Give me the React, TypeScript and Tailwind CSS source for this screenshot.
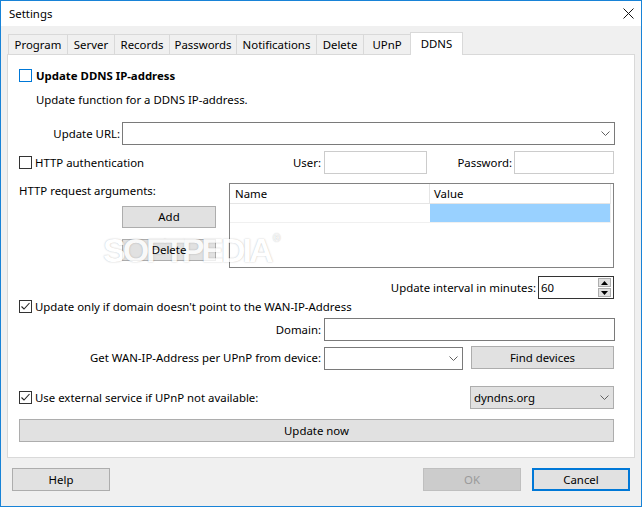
import React from "react";

function Check({ checked, blue }: { checked?: boolean; blue?: boolean }) {
  return (
    <span
      className={`w-[13px] h-[13px] shrink-0 border bg-white flex items-center justify-center ${
        blue ? "border-[#0078d7]" : "border-[#333333]"
      }`}
    >
      {checked && (
        <svg width="11" height="11" viewBox="0 0 11 11">
          <path d="M1.5 5.5 L4 8 L9.5 2" stroke="#222" strokeWidth="1.1" fill="none" />
        </svg>
      )}
    </span>
  );
}

function Chevron() {
  return (
    <svg width="9" height="5" viewBox="0 0 9 5" className="shrink-0">
      <polyline points="0.5,0.5 4.5,4.5 8.5,0.5" stroke="#606060" strokeWidth="1" fill="none" />
    </svg>
  );
}

const tabs: { label: string; w: string; sel?: boolean }[] = [
  { label: "Program", w: "w-[60px]" },
  { label: "Server", w: "w-[48px]" },
  { label: "Records", w: "w-[56px]" },
  { label: "Passwords", w: "w-[68px]" },
  { label: "Notifications", w: "w-[81px]" },
  { label: "Delete", w: "w-[48px]" },
  { label: "UPnP", w: "w-[48px]" },
  { label: "DDNS", w: "w-[53px]", sel: true },
];

export default function App() {
  return (
    <div className="w-[642px] h-[507px] border border-[#1883d7] bg-[#f0f0f0] flex flex-col text-[11.4px] leading-[16px] text-black font-['Noto_Sans',sans-serif] overflow-hidden">
      {/* Title bar */}
      <div className="h-[25px] bg-white flex items-center justify-between pl-[8px] pr-[7px] shrink-0">
        <span>Settings</span>
        <svg width="11" height="11" viewBox="0 0 11 11">
          <path d="M0.5 0.5 L10.5 10.5 M10.5 0.5 L0.5 10.5" stroke="#111" strokeWidth="1" />
        </svg>
      </div>

      <div className="flex-1 flex flex-col px-[6px]">
        {/* Tabs */}
        <div className="mt-[6px] h-[22px] flex items-end pl-[1px] shrink-0">
          {tabs.map((t, i) =>
            t.sel ? (
              <div
                key={t.label}
                className={`${t.w} h-[23px] -mb-px -ml-px relative z-10 bg-white border-t border-l border-r border-[#d9d9d9] flex items-start justify-center pt-[3px]`}
              >
                {t.label}
              </div>
            ) : (
              <div
                key={t.label}
                className={`${t.w} h-[20px] ${i === 0 ? "" : "-ml-px"} bg-[#f0f0f0] border-t border-l border-r border-[#d9d9d9] flex items-center justify-center`}
              >
                {t.label}
              </div>
            )
          )}
        </div>

        {/* Panel */}
        <div className="relative h-[404px] bg-white border border-[#d9d9d9] flex flex-col pl-[11px] pr-[20px] shrink-0">
          {/* R1 */}
          <div className="mt-[14px] h-[13px] flex items-center">
            <Check blue />
            <span className="ml-[4px] font-bold">Update DDNS IP-address</span>
          </div>
          {/* R2 */}
          <div className="mt-[10px] pl-[17px]">Update function for a DDNS IP-address.</div>
          {/* R3 */}
          <div className="mt-[14px] h-[23px] flex items-center">
            <div className="w-[101px] text-right">Update URL:</div>
            <div className="ml-[2px] -mr-px flex-1 h-[23px] border border-[#7a7a7a] bg-white flex items-center justify-end pr-[4px]">
              <Chevron />
            </div>
          </div>
          {/* R4 */}
          <div className="mt-[6px] h-[23px] flex items-center">
            <div className="w-[302px] flex items-center">
              <Check />
              <span className="ml-[3px]">HTTP authentication</span>
              <span className="ml-auto">User:</span>
            </div>
            <div className="ml-[3px] w-[103px] h-[23px] border border-[#cccccc] bg-white" />
            <div className="w-[87px] text-right pr-[2px]">Password:</div>
            <div className="flex-1 h-[23px] border border-[#cccccc] bg-white" />
          </div>
          {/* R5 */}
          <div className="mt-[9px] h-[85px] flex">
            <div className="w-[210px] flex flex-col">
              <div>HTTP request arguments:</div>
              <button className="ml-[103px] mt-[7px] w-[94px] h-[22px] bg-[#e1e1e1] border border-[#adadad] flex items-center justify-center">
                Add
              </button>
              <button className="ml-[103px] mt-[11px] w-[94px] h-[22px] bg-[#e1e1e1] border border-[#adadad] flex items-center justify-center">
                <span className="relative z-20">Delete</span>
              </button>
            </div>
            <div className="flex-1 h-[85px] border border-[#828282] bg-white flex flex-col">
              <div className="h-[20px] flex">
                <div className="w-[200px] h-[20px] border-r border-b border-[#e5e5e5] pl-[5px] flex items-center">Name</div>
                <div className="w-[181px] h-[20px] border-r border-b border-[#e5e5e5] pl-[4px] flex items-center">Value</div>
              </div>
              <div className="h-[19px] flex">
                <div className="w-[200px] h-[19px] border-b border-[#f0f0f0]" />
                <div className="w-[181px] h-[19px] border-b border-r border-[#f0f0f0] bg-[#99d1ff]" />
              </div>
            </div>
          </div>
          {/* R6 */}
          <div className="mt-[8px] h-[23px] flex items-center justify-end">
            <span>Update interval in minutes:</span>
            <div className="ml-[2px] w-[76px] h-[23px] border border-[#333333] bg-white flex items-center pl-[2px] pr-[2px]">
              <span>60</span>
              <div className="ml-auto flex flex-col gap-[1px]">
                <div className="w-[13px] h-[9px] border border-[#adadad] bg-[#e1e1e1] flex items-center justify-center">
                  <svg width="7" height="4" viewBox="0 0 7 4">
                    <polygon points="3.5,0 7,4 0,4" fill="#000" />
                  </svg>
                </div>
                <div className="w-[13px] h-[9px] border border-[#adadad] bg-[#e1e1e1] flex items-center justify-center">
                  <svg width="7" height="4" viewBox="0 0 7 4">
                    <polygon points="0,0 7,0 3.5,4" fill="#000" />
                  </svg>
                </div>
              </div>
            </div>
          </div>
          {/* R7 */}
          <div className="mt-[1px] h-[13px] flex items-center">
            <Check checked />
            <span className="ml-[3px]">Update only if domain doesn't point to the WAN-IP-Address</span>
          </div>
          {/* R8 */}
          <div className="mt-[5px] h-[23px] flex items-center">
            <div className="w-[302px] text-right">Domain:</div>
            <div className="ml-[3px] -mr-px flex-1 h-[23px] border border-[#7a7a7a] bg-white" />
          </div>
          {/* R9 */}
          <div className="mt-[5px] h-[23px] flex items-center">
            <div className="w-[302px] text-right">Get WAN-IP-Address per UPnP from device:</div>
            <div className="ml-[3px] mt-[2px] w-[139px] h-[23px] border border-[#7a7a7a] bg-white flex items-center justify-end pr-[4px]">
              <Chevron />
            </div>
            <button className="ml-auto w-[143px] h-[23px] bg-[#e1e1e1] border border-[#adadad] flex items-center justify-center">
              Find devices
            </button>
          </div>
          {/* R10 */}
          <div className="mt-[17px] h-[23px] flex items-center">
            <Check checked />
            <span className="ml-[3px]">Use external service if UPnP not available:</span>
            <div className="ml-auto w-[144px] h-[23px] bg-[#e1e1e1] border border-[#adadad] flex items-center pl-[3px] pr-[4px]">
              <span>dyndns.org</span>
              <span className="ml-auto">
                <Chevron />
              </span>
            </div>
          </div>
          {/* R11 */}
          <button className="mt-[10px] w-full h-[23px] bg-[#e1e1e1] border border-[#adadad] flex items-center justify-center">
            Update now
          </button>

          {/* Watermark */}
          <div className="absolute z-10 left-[95px] top-[178px] pointer-events-none select-none flex items-start opacity-80">
            <span className="font-['Liberation_Sans',sans-serif] font-bold text-[34px] leading-[34px] tracking-[-3px] text-white [text-shadow:0_0_1.5px_rgba(0,0,0,0.35)]">
              SOFTPEDIA
            </span>
            <span className="text-[10px] leading-[10px] text-white [text-shadow:0_0_1px_rgba(0,0,0,0.4)] ml-[2px]">®</span>
          </div>
        </div>

        {/* Bottom buttons */}
        <div className="mt-[10px] h-[23px] flex items-center pl-[5px] pr-[5px]">
          <button className="w-[98px] h-[23px] bg-[#e1e1e1] border border-[#adadad] flex items-center justify-center">
            Help
          </button>
          <button className="ml-auto w-[98px] h-[23px] bg-[#cccccc] border border-[#bfbfbf] text-[#9a9a9a] flex items-center justify-center">
            OK
          </button>
          <button className="ml-[11px] w-[98px] h-[23px] bg-[#e1e1e1] border-2 border-[#0078d7] flex items-center justify-center">
            Cancel
          </button>
        </div>
      </div>
    </div>
  );
}
